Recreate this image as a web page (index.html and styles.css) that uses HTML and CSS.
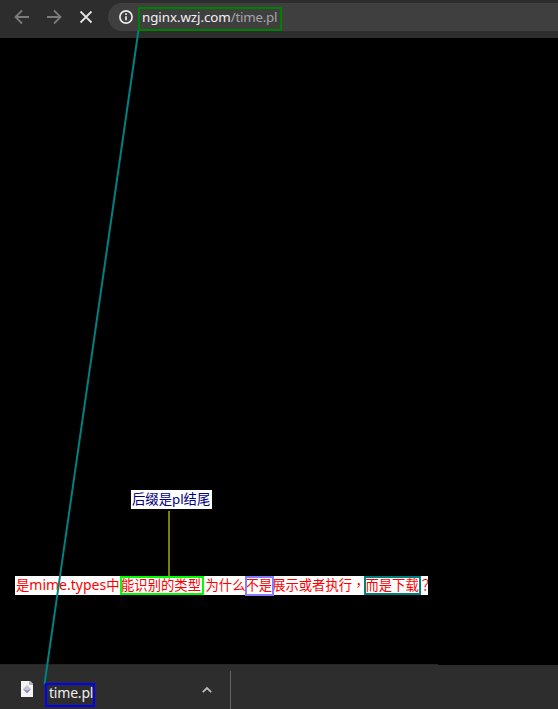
FILE: index.html
```
<!DOCTYPE html>
<html lang="zh-CN">
<head>
  <meta charset="UTF-8">
  <title>nginx.wzj.com/time.pl</title>
  <link rel="stylesheet" href="styles.css">
</head>
<body>

  <div class="browser">
    <header class="toolbar">
      <svg class="nav-icon" viewBox="0 0 16 16"><path d="M15 8H2M8 1.5L1.5 8L8 14.5"/></svg>
      <svg class="nav-icon" viewBox="0 0 16 16"><path d="M1 8h13M8 1.5L14.5 8L8 14.5"/></svg>
      <svg class="nav-icon stop" viewBox="0 0 16 16"><path d="M2.5 2.5l11 11M13.5 2.5l-11 11"/></svg>
      <div class="address">
        <svg class="info" viewBox="0 0 16 16">
          <circle cx="8" cy="8" r="6.1"/>
          <path d="M8 7.2v4M8 4.3v1.6"/>
        </svg>
        <div class="url">nginx.wzj.com<span class="path">/time.pl</span></div>
      </div>
    </header>

    <main class="page"></main>

    <footer class="downloads">
      <div class="item">
        <svg class="file-icon" viewBox="0 0 12 16">
          <path fill="#f4f4f4" d="M0 0h9l3 3v13H0z"/>
          <path fill="#b5b5b5" d="M8 0h1l3 3v1H8z"/>
          <path fill="#c3c3dc" d="M6 4l4 4-4 4-4-4z"/>
          <path fill="#8c8cb8" d="M2 8l4 1.5L10 8l-4 4.5z"/>
        </svg>
        <span class="file-name">time.pl</span>
        <svg class="chevron" viewBox="0 0 12 8"><path d="M1.8 6.2L6 2l4.2 4.2"/></svg>
      </div>
    </footer>
  </div>

  <!-- Notes drawn over the page -->
  <div class="note note-suffix">后缀是pl结尾</div>
  <div class="note note-question">
    <span class="lead">是<span class="mime">mime.types</span>中</span>
    <span class="known">能识别的类型</span>
    <span class="ask">为什么不是展示或者执行<span class="punct" lang="zh-TW">，</span>而是下载<span class="punct" lang="zh-TW">？</span></span>
  </div>

  <svg class="marks" viewBox="0 0 558 709">
    <path class="teal" d="M138.5 30L44.5 684"/>
    <path class="olive" d="M169 511v65"/>
    <rect x="139" y="8" width="142" height="22" stroke="#008000"/>
    <rect x="46" y="684" width="48" height="22" stroke="#0000ff"/>
    <rect x="121" y="577" width="82" height="17" stroke="#00ff00"/>
    <rect x="246" y="577" width="27" height="18" stroke="#8080ff"/>
    <rect class="teal" x="365" y="577" width="55" height="17"/>
  </svg>

</body>
</html>
```

FILE: styles.css
```
body {
  margin: 0;
  background: #000;
  font-family: "Noto Sans", "Noto Sans CJK SC", sans-serif;
  overflow: hidden;
}

.browser {
  display: flex;
  flex-direction: column;
  height: 709px;
}

.toolbar {
  display: flex;
  align-items: center;
  height: 38px;
  padding: 0 0 4px 14px;
  box-sizing: border-box;
  background: #2d2d2d;
}

.nav-icon {
  width: 16px;
  height: 16px;
  margin-right: 16px;
  fill: none;
  stroke: #7b7b7b;
  stroke-width: 1.8;
}

.nav-icon.stop {
  margin-right: 14px;
  stroke: #e2e2e2;
}

.address {
  display: flex;
  align-items: center;
  flex: 1;
  height: 28px;
  padding-left: 10px;
  border-radius: 14px 0 0 14px;
  background: #3f3f3f;
}

.info {
  width: 16px;
  height: 16px;
  fill: none;
  stroke: #ececec;
  stroke-width: 1.7;
}

.url {
  margin-left: 8px;
  color: #f2f2f2;
  font-size: 13.33px;
  line-height: 20px;
  letter-spacing: -0.05px;
  white-space: nowrap;
}

.path {
  color: #a5a5a5;
  letter-spacing: -0.25px;
}

.page {
  flex: 1;
}

.downloads {
  display: flex;
  align-items: flex-end;
  height: 45px;
  /* thin top edge stops at 438px */
  background:
    linear-gradient(#262626, #262626) 0 0 / 438px 1px no-repeat,
    linear-gradient(#2d2d2d, #2d2d2d) 0 1px no-repeat;
}

.item {
  display: flex;
  align-items: center;
  width: 231px;
  height: 38px;
  padding-left: 21px;
  box-sizing: border-box;
  border-right: 1px solid #666;
}

.file-icon {
  width: 12px;
  height: 16px;
  margin-top: -2px;
}

.file-name {
  width: 152px;
  margin: 6px 0 0 16px;
  color: #eee;
  font-size: 14px;
  line-height: 20px;
  letter-spacing: -0.2px;
}

.chevron {
  width: 12px;
  height: 8px;
  fill: none;
  stroke: #bbb;
  stroke-width: 1.8;
}

.note {
  position: absolute;
  height: 19px;
  background: #fff;
  font-size: 13.33px;
  line-height: 19px;
  white-space: nowrap;
}

.note-suffix {
  left: 131px;
  top: 490px;
  width: 80px;
  padding-left: 1px;
  color: #000080;
}

.note-question {
  display: flex;
  left: 15px;
  top: 576px;
  width: 412px;
  padding-left: 1px;
  color: #f00;
  overflow: hidden;
}

.lead {
  flex: 0 0 105px;
}

.mime {
  font-size: 14px;
  line-height: 1;
}

.known {
  flex: 0 0 84.5px;
}

.ask {
  flex-shrink: 0;
}

.punct {
  font-family: "Noto Sans CJK TC", sans-serif;
  line-height: 1;
}

.marks {
  position: absolute;
  left: 0;
  top: 0;
  width: 558px;
  height: 709px;
  fill: none;
  stroke-width: 2;
}

.teal {
  stroke: #008080;
}

.olive {
  stroke: #808000;
}
```
